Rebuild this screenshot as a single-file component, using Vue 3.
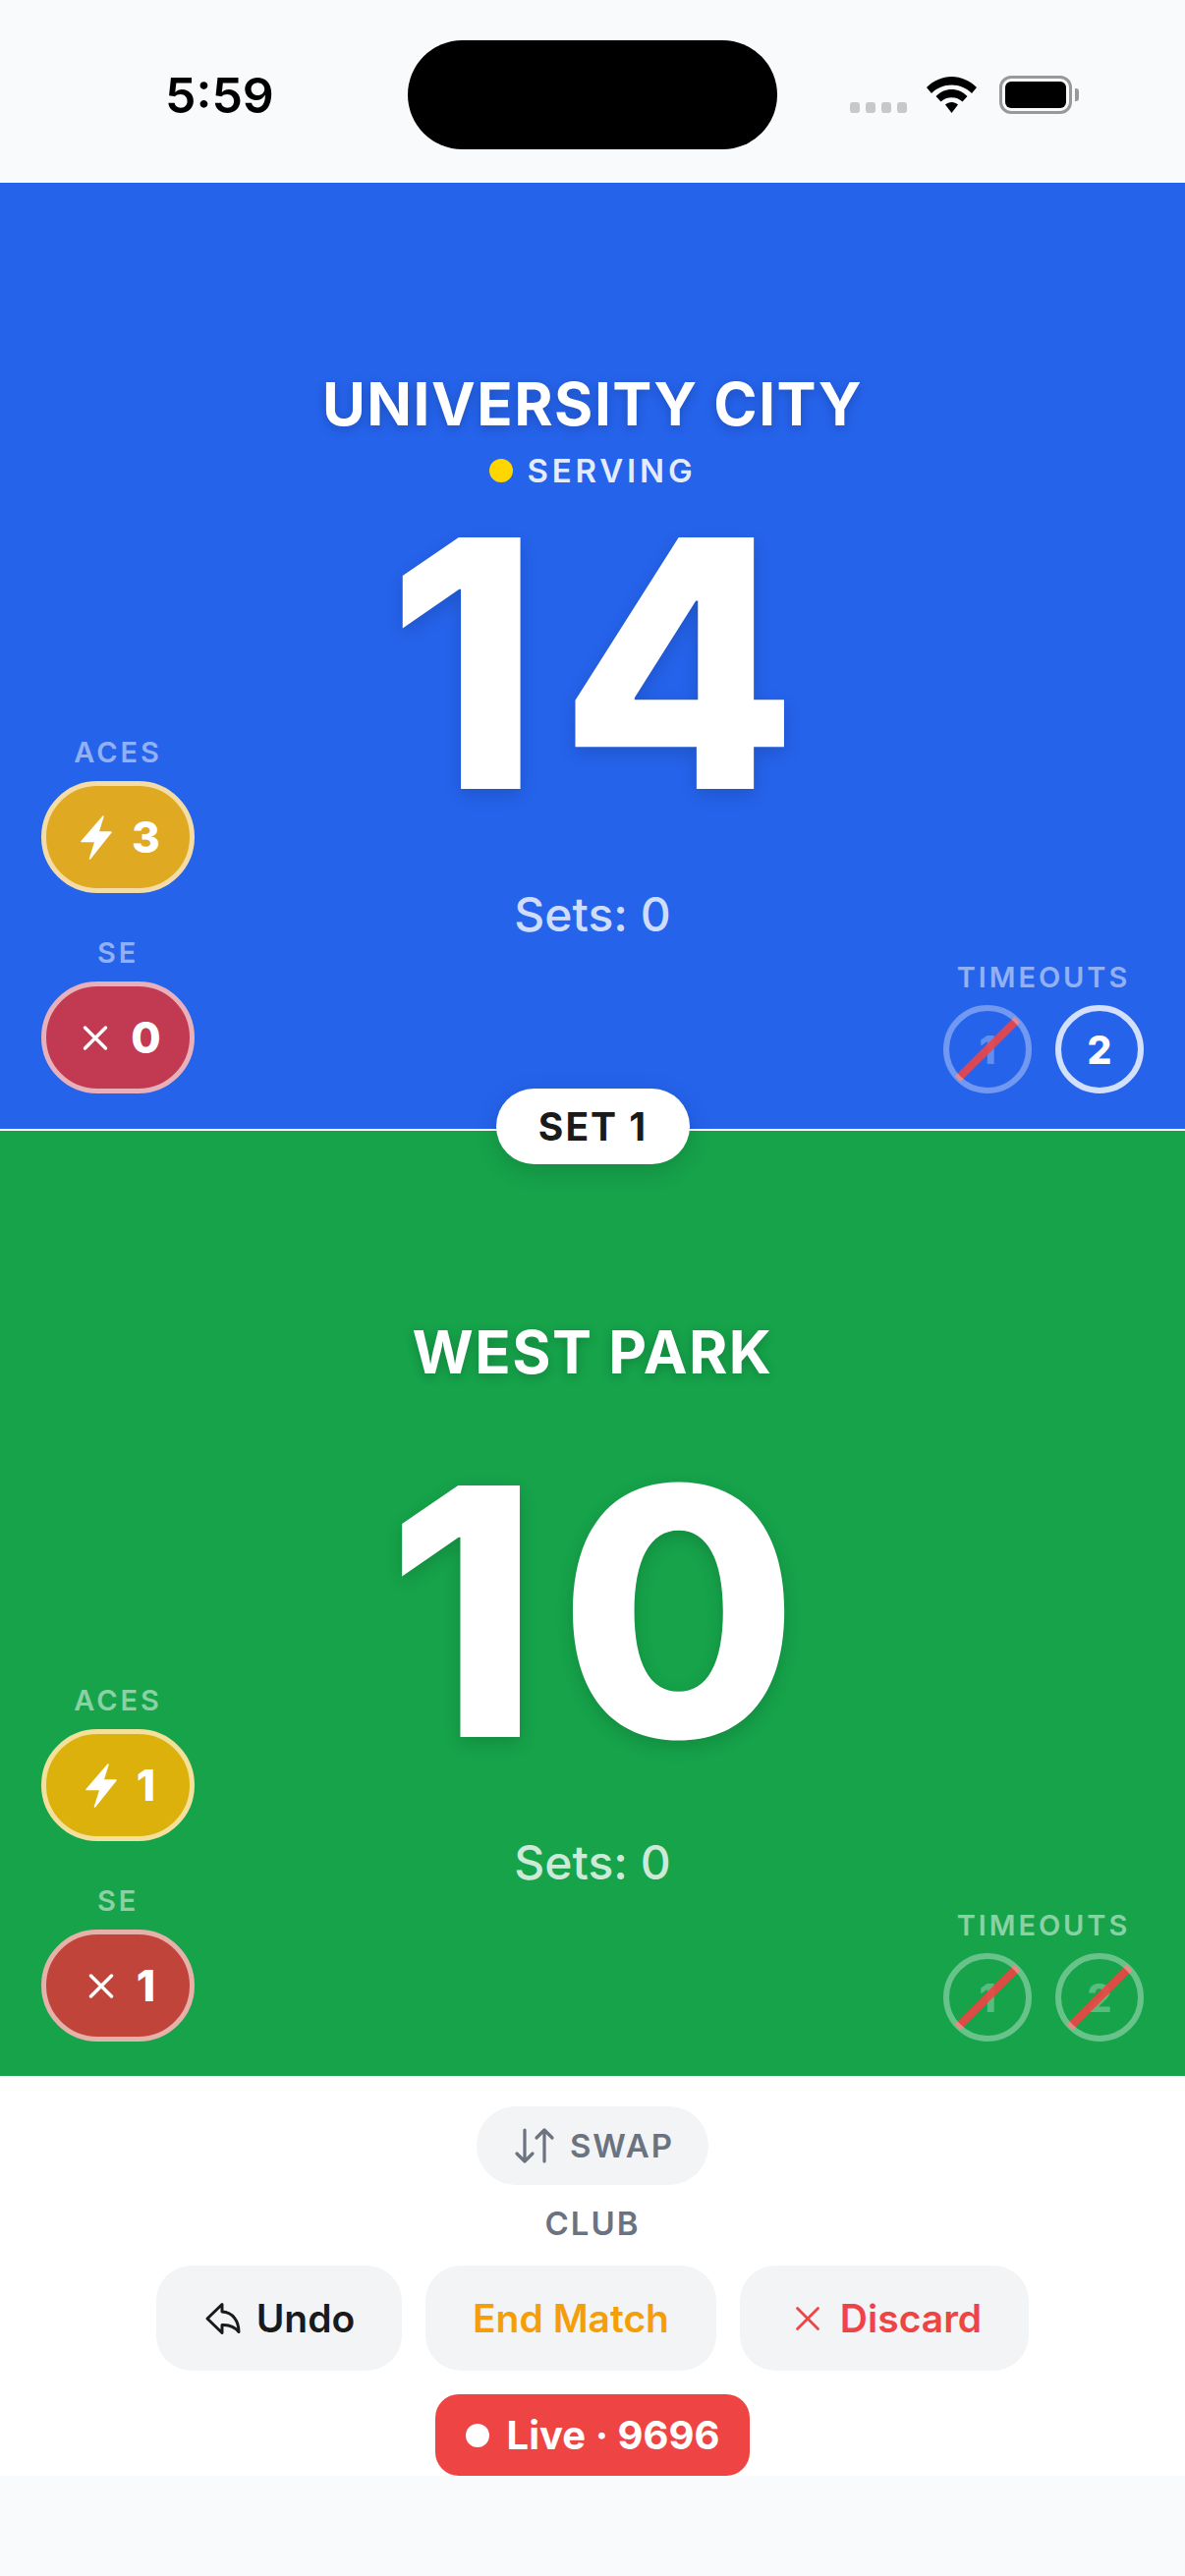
<template>
  <div class="screen">
    <header class="status-bar">
      <span class="clock">5:59</span>
      <div class="island"></div>
      <div class="status-icons">
        <div class="signal">
          <i v-for="n in 4" :key="n"></i>
        </div>
        <svg class="wifi" viewBox="0 0 51 37">
          <path d="M25.500 0C35 0 44 4 51 11L46 17C40.500 11.500 33.500 8.500 25.500 8.500C17.500 8.500 10.500 11.500 5 17L0 11C7 4 16 0 25.500 0Z" />
          <path d="M25.500 13C31.500 13 37 15.500 41.500 20L36.500 25.500C33.500 22.800 29.800 21.300 25.500 21.300C21.200 21.300 17.500 22.800 14.500 25.500L9.500 20C14 15.500 19.500 13 25.500 13Z" />
          <path d="M25.500 26C28 26 30.200 26.900 32 28.500L25.500 37L19 28.500C20.800 26.900 23 26 25.500 26Z" />
        </svg>
        <div class="battery">
          <div class="battery-level"></div>
        </div>
        <div class="battery-nub"></div>
      </div>
    </header>

    <div class="panels">
      <section
        v-for="team in teams"
        :key="team.name"
        class="panel"
        :class="`panel-${team.color}`"
      >
        <div class="stats">
          <div class="stat">
            <span class="label">ACES</span>
            <div class="stat-pill ace">
              <svg class="stat-icon" viewBox="-5 0 42 45">
                <path class="zap" d="M23 1 1 26.500H15L9.500 44 31 17H18Z" />
              </svg>
              <span>{{ team.aces }}</span>
            </div>
          </div>
          <div class="stat">
            <span class="label">SE</span>
            <div class="stat-pill error">
              <svg class="stat-icon" viewBox="0 0 24 24">
                <path class="cross" d="M18 6 6 18M6 6l12 12" />
              </svg>
              <span>{{ team.errors }}</span>
            </div>
          </div>
        </div>

        <div class="center">
          <h2 class="team-name">{{ team.name }}</h2>
          <div class="serving" :class="{ hidden: !team.serving }">
            <span class="serving-dot"></span>
            <span>SERVING</span>
          </div>
          <div class="score">{{ team.score }}</div>
          <div class="sets">Sets: 0</div>
        </div>

        <div class="timeouts">
          <span class="label">TIMEOUTS</span>
          <div class="timeout-row">
            <div
              v-for="t in team.timeouts"
              :key="t.n"
              class="timeout"
              :class="{ used: t.used }"
            >
              <span>{{ t.n }}</span>
              <i v-if="t.used" class="slash"></i>
            </div>
          </div>
        </div>
      </section>

      <div class="set-badge">SET 1</div>
    </div>

    <div class="controls">
      <button class="swap">
        <svg viewBox="0 0 24 24">
          <path d="m3 16 4 4 4-4M7 20V4M21 8l-4-4-4 4M17 4v16" />
        </svg>
        SWAP
      </button>
      <div class="club">CLUB</div>
      <div class="actions">
        <button class="action undo">
          <svg viewBox="-4 -6.500 42 42">
            <path d="M15 0 0 14.500 15 29V21C22 20.500 28 23 32 28C32 17 26 8 15 7.500Z" />
          </svg>
          Undo
        </button>
        <button class="action end">End Match</button>
        <button class="action discard">
          <svg viewBox="0 0 24 24">
            <path d="M18 6 6 18M6 6l12 12" />
          </svg>
          Discard
        </button>
      </div>
      <div class="live">
        <span class="live-dot"></span>
        Live · 9696
      </div>
    </div>

    <div class="footer"></div>
  </div>
</template>

<script setup>
const teams = [
  {
    name: 'UNIVERSITY CITY',
    color: 'blue',
    serving: true,
    score: 14,
    aces: 3,
    errors: 0,
    timeouts: [
      { n: 1, used: true },
      { n: 2, used: false }
    ]
  },
  {
    name: 'WEST PARK',
    color: 'green',
    serving: false,
    score: 10,
    aces: 1,
    errors: 1,
    timeouts: [
      { n: 1, used: true },
      { n: 2, used: true }
    ]
  }
]
</script>

<style scoped>
.screen {
  width: 1206px;
  height: 2622px;
  display: flex;
  flex-direction: column;
  overflow: hidden;
  background: #f9fafb;
  font-family: Inter, "Liberation Sans", sans-serif;
  font-optical-sizing: none;
}

/* Status bar */
.status-bar {
  height: 186px;
  flex: none;
  display: flex;
  align-items: center;
  padding: 7px 106px 0 168px;
  box-sizing: border-box;
  background: #f9fafb;
}
.clock {
  width: 247px;
  font-size: 50px;
  font-weight: 600;
  color: #000;
  line-height: 1;
}
.island {
  width: 376px;
  height: 111px;
  border-radius: 56px;
  background: #000;
}
.status-icons {
  margin-left: 74px;
  display: flex;
  align-items: center;
}
.signal {
  display: flex;
  gap: 6px;
  margin-top: 26px;
}
.signal i {
  width: 10px;
  height: 11px;
  border-radius: 3px;
  background: #c7c7cc;
}
.wifi {
  width: 51px;
  height: 37px;
  margin-left: 20px;
  fill: #000;
}
.battery {
  width: 74px;
  height: 39px;
  margin-left: 23px;
  box-sizing: border-box;
  border: 3px solid #999;
  border-radius: 12px;
  padding: 3px;
}
.battery-level {
  width: 100%;
  height: 100%;
  border-radius: 6px;
  background: #000;
}
.battery-nub {
  width: 4px;
  height: 13px;
  margin-left: 3px;
  border-radius: 0 3px 3px 0;
  background: #999;
}

/* Score panels */
.panels {
  position: relative;
  display: flex;
  flex-direction: column;
  gap: 2px;
  background: #fff;
}
.panel {
  display: grid;
  grid-template-columns: 1fr auto 1fr;
  box-sizing: border-box;
  color: #fff;
}
.panel-blue {
  height: 963px;
  padding: 0 42px 36px;
  background: #2563eb;
}
.panel-green {
  height: 962px;
  padding: 0 42px 35px;
  background: #16a34a;
}

.label {
  font-size: 29px;
  font-weight: 600;
  letter-spacing: 2.900px;
  line-height: 36px;
  color: rgba(255, 255, 255, 0.5);
}

.stats {
  align-self: end;
  justify-self: start;
  display: flex;
  flex-direction: column;
  gap: 43px;
  width: 156px;
}
.stat {
  display: flex;
  flex-direction: column;
  align-items: center;
  gap: 11px;
}
.stat-pill {
  width: 156px;
  height: 114px;
  display: flex;
  align-items: center;
  justify-content: center;
  gap: 15px;
  box-sizing: border-box;
  border: 5px solid;
  border-radius: 57px;
  font-size: 44px;
  font-weight: 800;
}
.stat-icon {
  width: 42px;
  height: 45px;
}
.zap {
  fill: #fff;
  stroke: #fff;
  stroke-width: 1.500;
  stroke-linejoin: round;
}
.cross {
  fill: none;
  stroke: #fff;
  stroke-width: 2;
  stroke-linecap: round;
}
.panel-blue .ace {
  background: #dfa921;
  border-color: #f3dca6;
}
.panel-blue .error {
  background: #c23a52;
  border-color: #e7b0ba;
}
.panel-green .ace {
  background: #dcb10c;
  border-color: #f2e09b;
}
.panel-green .error {
  background: #c04439;
  border-color: #e6b0ab;
}

.center {
  display: flex;
  flex-direction: column;
  align-items: center;
  padding-top: 186px;
}
.team-name {
  margin: 0;
  font-size: 60px;
  font-weight: 700;
  letter-spacing: 1.500px;
  line-height: 78px;
  text-shadow: 0 3px 12px rgba(0, 0, 0, 0.2);
}
.serving {
  display: flex;
  align-items: center;
  gap: 15px;
  margin-top: 9px;
  font-size: 33px;
  font-weight: 600;
  letter-spacing: 3.800px;
  line-height: 40px;
  color: rgba(255, 255, 255, 0.9);
}
.hidden {
  visibility: hidden;
}
.serving-dot {
  width: 24px;
  height: 24px;
  border-radius: 50%;
  background: #ffd600;
}
.score {
  font-size: 352px;
  font-weight: 800;
  line-height: 1;
  letter-spacing: 20px;
  padding-left: 20px;
  text-shadow: 0 6px 18px rgba(0, 0, 0, 0.15);
}
.sets {
  margin-top: 53px;
  font-size: 48px;
  font-weight: 500;
  line-height: 54px;
  color: rgba(255, 255, 255, 0.8);
}

.timeouts {
  align-self: end;
  justify-self: end;
  display: flex;
  flex-direction: column;
  align-items: center;
  gap: 10px;
}
.timeout-row {
  display: flex;
  gap: 24px;
}
.timeout {
  position: relative;
  width: 90px;
  height: 90px;
  display: flex;
  align-items: center;
  justify-content: center;
  box-sizing: border-box;
  border-radius: 50%;
  font-size: 39px;
  font-weight: 800;
}
/* ring sits above the slash, so the slash ends show through it */
.timeout::after {
  content: "";
  position: absolute;
  inset: 0;
  border: 6px solid rgba(255, 255, 255, 0.8);
  border-radius: 50%;
}
.timeout.used {
  color: rgba(255, 255, 255, 0.3);
}
.timeout.used::after {
  border-color: rgba(255, 255, 255, 0.35);
}
.slash {
  position: absolute;
  left: 50%;
  top: 50%;
  width: 86px;
  height: 8px;
  margin: -4px 0 0 -43px;
  background: rgba(239, 68, 68, 0.9);
  transform: rotate(-45deg);
}

.set-badge {
  position: absolute;
  left: 505px;
  top: 922px;
  width: 197px;
  height: 77px;
  display: flex;
  align-items: center;
  justify-content: center;
  border-radius: 39px;
  background: #fff;
  color: #1a1a1a;
  font-size: 39px;
  font-weight: 700;
  letter-spacing: 2px;
  box-shadow: 0 6px 24px rgba(0, 0, 0, 0.15);
  z-index: 2;
}

/* Bottom controls */
.controls {
  height: 407px;
  flex: none;
  box-sizing: border-box;
  padding-top: 31px;
  display: flex;
  flex-direction: column;
  align-items: center;
  background: #fff;
}
button {
  border: 0;
  font-family: inherit;
  font-optical-sizing: none;
  background: #f3f4f6;
  display: flex;
  align-items: center;
  justify-content: center;
}
.swap {
  width: 236px;
  height: 80px;
  gap: 12px;
  border-radius: 40px;
  color: #6b7280;
  font-size: 33px;
  font-weight: 600;
  letter-spacing: 2px;
  padding: 0;
}
.swap svg {
  width: 48px;
  height: 48px;
  fill: none;
  stroke: #6b7280;
  stroke-width: 1.600;
  stroke-linecap: round;
  stroke-linejoin: round;
}
.club {
  margin-top: 21px;
  font-size: 33px;
  font-weight: 600;
  line-height: 36px;
  letter-spacing: 2px;
  color: #6b7280;
}
.actions {
  margin-top: 25px;
  display: flex;
  gap: 24px;
}
.action {
  height: 107px;
  gap: 12px;
  padding: 0;
  border-radius: 36px;
  font-size: 39px;
  font-weight: 600;
}
.undo {
  width: 250px;
  color: #1a1a1a;
}
.undo svg {
  width: 42px;
  height: 42px;
  fill: none;
  stroke: #1a1a1a;
  stroke-width: 3;
  stroke-linejoin: round;
}
.end {
  width: 296px;
  color: #f59e0b;
}
.discard {
  width: 294px;
  color: #ef4444;
}
.discard svg {
  width: 42px;
  height: 42px;
  fill: none;
  stroke: #ef4444;
  stroke-width: 1.600;
  stroke-linecap: round;
}
.live {
  margin-top: 24px;
  width: 320px;
  height: 83px;
  display: flex;
  align-items: center;
  justify-content: center;
  gap: 18px;
  border-radius: 24px;
  background: #ef4444;
  color: #fff;
  font-size: 40px;
  font-weight: 700;
}
.live-dot {
  width: 24px;
  height: 24px;
  border-radius: 50%;
  background: #fff;
}

.footer {
  flex: 1;
  background: #f9fafb;
}
</style>
